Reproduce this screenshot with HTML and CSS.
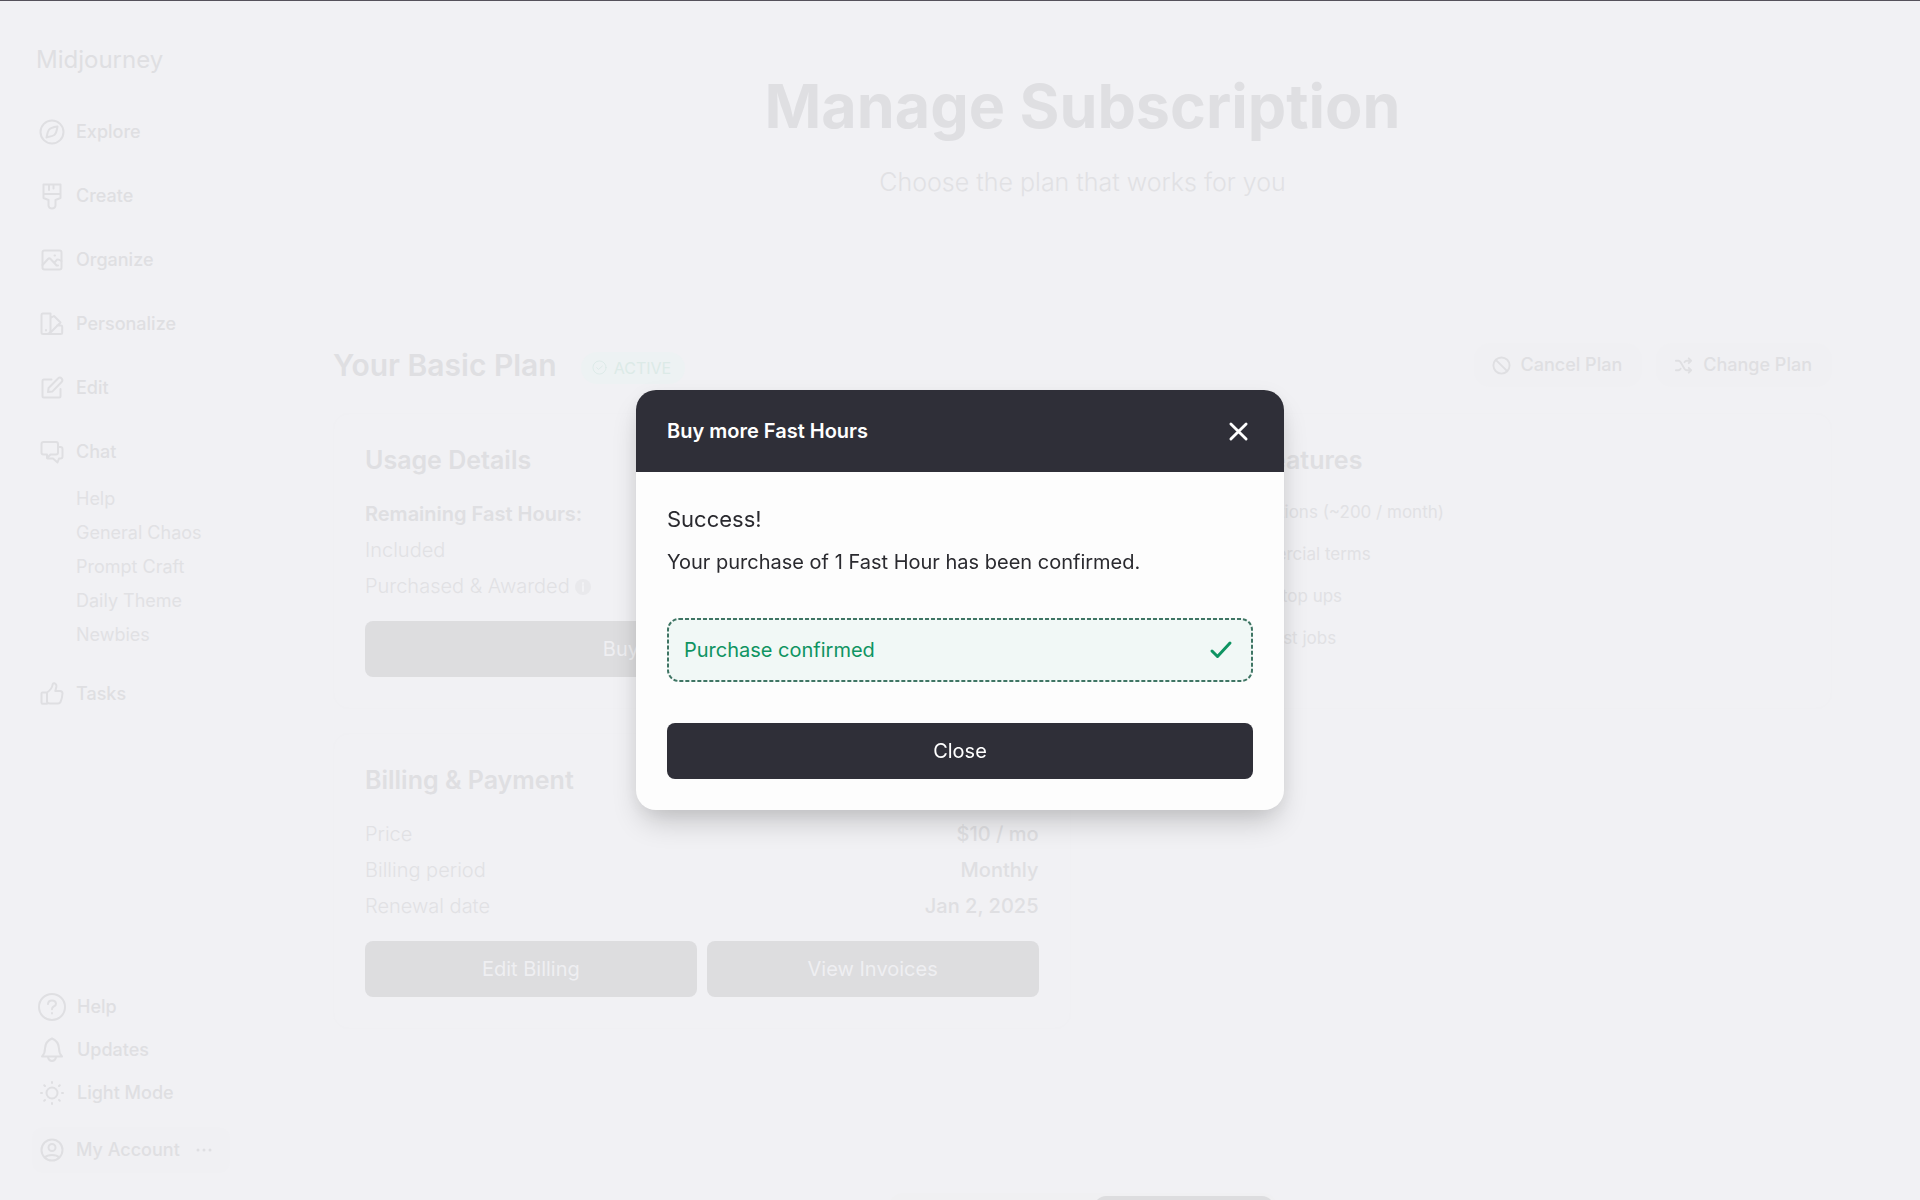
FILE: index.html
```html
<!DOCTYPE html>
<html lang="en">
<head>
<meta charset="utf-8">
<title>Manage Subscription</title>
<link rel="stylesheet" href="styles.css">
</head>
<body>
<div class="app">
  <aside class="sidebar">
    <a class="wordmark" href="#">Midjourney</a>
    <nav class="nav">
      <a href="#"><svg class="icon" viewBox="0 0 24 24"><circle cx="12" cy="12" r="11.500"/><path d="M17.500 6.500c-4 .5-7 1-8.700 3.500C7.500 12 7.300 14.500 6.500 17.500c2.500-.8 5.500-1 7.800-2.500 2.200-1.500 2.400-4.500 3.200-8.500z"/></svg>Explore</a>
      <a href="#"><svg class="icon" viewBox="0 0 24 24"><path d="M3.500 .5h17v13.500l-5 2v5.500a3.500 3 0 0 1-7 0V16l-5-2zM3.500 10h17M9 .5v5.500M13.500 .5v4"/></svg>Create</a>
      <a href="#"><svg class="icon" viewBox="0 0 24 24"><rect x="2.500" y="2.500" width="19" height="19" rx="2"/><path d="M2.500 17l5.500-6q1.300-1.300 2.600 0l6 6.500h1.400M14.500 14.500l2.500-2.800q1.200-.8 4.500 1.300M14.500 7.500h.5"/></svg>Organize</a>
      <a href="#"><svg class="icon" viewBox="0 0 24 24"><path d="M3 1.500h7.500v17a3.500 3.500 0 0 1-3.500 3.500H3q-1.500 0-1.500-1.500V3q0-1.500 1.500-1.500zM10.500 6l3.500-2 6.500 6.500-11 11M17 13.500h4q1.200 0 1.200 1.200V20.500q0 1.500-1.500 1.500H7M6 18v.5"/></svg>Personalize</a>
      <a href="#"><svg class="icon" viewBox="0 0 24 24"><path d="M11.500 3.500H4q-1.500 0-1.500 1.500v15q0 1.500 1.500 1.500h15q1.500 0 1.500-1.500v-7M8 16l.6-4 9.400-9.500q2-1.800 3.600 0t0 3.500L12.500 15.400z"/></svg>Edit</a>
      <div class="chat">
        <a href="#"><svg class="icon" viewBox="0 0 24 24"><path d="M3.500 2h12.500q2 0 2 2v8.500q0 2-2 2h-5.500L7 18v-3.500H3.500q-2 0-2-2V4q0-2 2-2zM18 7h2.500q2 0 2 2v7.500q0 2-2 2H19l-1.500 4-4.500-4H7.500"/></svg>Chat</a>
        <div class="subnav">
          <a href="#">Help</a>
          <a href="#">General Chaos</a>
          <a href="#">Prompt Craft</a>
          <a href="#">Daily Theme</a>
          <a href="#">Newbies</a>
        </div>
      </div>
      <a href="#"><svg class="icon" viewBox="0 0 24 24"><path d="M7 10.500q5-3.500 5.500-7.500.5-2.500 2.500-1.500 1.800 1 1.300 3.500l-1 4H20q2.500 0 2.500 2.500-.3 5-2 8.500-.7 1.500-2.500 1.500h-8q-3 0-3-2zM7 10.500H2.500q-1 0-1 1v9q0 1.200 1 1.200H7"/></svg>Tasks</a>
    </nav>
    <nav class="utility">
      <a href="#"><svg class="icon" viewBox="0 0 24 24"><circle cx="12" cy="12" r="13"/><path d="M8 9q.3-3.500 4-3.500t4 3.200q0 1.800-2.300 2.800-1.700.8-1.700 2.800M12 18v.5"/></svg>Help</a>
      <a href="#"><svg class="icon" viewBox="0 0 24 24"><path d="M2 18.500q3-3 3-8 .5-7.500 7-10 6.500 2.500 7 10 0 5 3 8zM8 19.500q1 3.500 4 3.500t4-3.500"/></svg>Updates</a>
      <a href="#"><svg class="icon" viewBox="0 0 24 24"><circle cx="12" cy="12" r="5.500"/><path d="M12 1v1M12 22v1M1 12h1M22 12h1M4.200 4.200l.8.8M19 19l.8.8M19.800 4.200l-.8.8M5 19l-.8.800"/></svg>Light Mode</a>
    </nav>
    <button class="account" type="button"><svg class="icon" viewBox="0 0 24 24"><circle cx="12" cy="12" r="10.500"/><circle cx="12" cy="9.500" r="3.500"/><path d="M5 19.500q2-2.500 7-2.500t7 2.500"/></svg>My Account<svg class="dots" viewBox="0 0 16 4"><circle cx="2" cy="2" r="1.500"/><circle cx="8" cy="2" r="1.500"/><circle cx="14" cy="2" r="1.500"/></svg></button>
  </aside>

  <main class="main">
    <header class="hero">
      <h1>Manage Subscription</h1>
      <p>Choose the plan that works for you</p>
    </header>
    <section>
      <div class="plan-head">
        <h2>Your Basic Plan</h2>
        <span class="badge"><svg viewBox="0 0 16 16"><circle cx="8" cy="8" r="7"/><path d="M5 8.200l2 1.800 4-3.500"/></svg>ACTIVE</span>
        <div class="plan-actions">
          <button type="button"><svg viewBox="0 0 20 20"><circle cx="10" cy="10" r="8.500"/><path d="M4 4l12 12"/></svg>Cancel Plan</button>
          <button type="button"><svg viewBox="0 0 20 20"><path d="M2 5h2.500q1.500 0 2.500 1.500l4 7q1 1.500 2.500 1.500H18M2 15h2.500q1.500 0 2.500-1.500M11 6.500Q12 5 13.500 5H18M15.500 2.500L18 5l-2.500 2.500M15.500 12.500L18 15l-2.500 2.500"/></svg>Change Plan</button>
        </div>
      </div>
      <div class="cards">
        <article class="card">
          <h3>Usage Details</h3>
          <dl>
            <div><dt><b>Remaining Fast Hours:</b></dt></div>
            <div><dt>Included</dt></div>
            <div><dt>Purchased &amp; Awarded <svg class="info" viewBox="0 0 16 16"><circle cx="8" cy="8" r="8"/><path d="M8 7v5M8 4v1"/></svg></dt></div>
          </dl>
          <div class="card-actions"><button type="button">Buy more Fast Hours</button></div>
        </article>
        <article class="card">
          <h3>Basic Plan Features</h3>
          <ul>
            <li>Limited generations (~200 / month)</li>
            <li>General commercial terms</li>
            <li>Optional credit top ups</li>
            <li>3 concurrent fast jobs</li>
          </ul>
        </article>
        <article class="card">
          <h3>Billing &amp; Payment</h3>
          <dl>
            <div><dt>Price</dt><dd>$10 / mo</dd></div>
            <div><dt>Billing period</dt><dd>Monthly</dd></div>
            <div><dt>Renewal date</dt><dd>Jan 2, 2025</dd></div>
          </dl>
          <div class="card-actions"><button type="button">Edit Billing</button><button type="button">View Invoices</button></div>
        </article>
      </div>
    </section>
    <div class="period"><span></span><span class="period-on"></span></div>
  </main>
</div>

<div class="overlay">
  <div class="modal" role="dialog" aria-labelledby="modal-title">
    <header class="modal-head">
      <h2 id="modal-title">Buy more Fast Hours</h2>
      <button type="button" aria-label="Dismiss"><svg viewBox="0 0 20 20"><path d="M2 2l16 16M18 2L2 18"/></svg></button>
    </header>
    <div class="modal-body">
      <h3>Success!</h3>
      <p>Your purchase of 1 Fast Hour has been confirmed.</p>
      <div class="confirmed"><svg class="dashes"><rect width="100%" height="100%" rx="11"/></svg>Purchase confirmed<svg class="check" viewBox="0 0 22 18"><path d="M2 10l5.500 5.500L20 2"/></svg></div>
      <button class="close" type="button">Close</button>
    </div>
  </div>
</div>
</body>
</html>
```
FILE: styles.css
```css
* { box-sizing: border-box; }

:root {
  --page: #f1f1f4;
  --faint: #dfdfe2;
  --fainter: #e1e1e4;
  --ink: #2f2f38;
}

html, body { height: 100%; }

body {
  margin: 0;
  overflow: hidden;
  background: var(--page);
  color: var(--faint);
  font-family: Inter, "Liberation Sans", sans-serif;
  font-size: 20px;
  line-height: 24px;
}

h1, h2, h3, p, dl, dd, ul { margin: 0; padding: 0; }
a { color: inherit; text-decoration: none; }
button { border: 0; padding: 0; background: none; color: inherit; font: inherit; }
svg { flex: none; fill: none; stroke: currentColor; stroke-width: 2; stroke-linecap: round; stroke-linejoin: round; overflow: visible; }

.app {
  display: grid;
  grid-template-columns: 245px 1fr;
  grid-template-rows: minmax(0, 1fr);
  height: 100%;
  overflow: hidden;
  border-top: 1px solid #55525b;
}

.sidebar {
  display: flex;
  flex-direction: column;
  padding: 44px 8px 27px 32px;
  font-size: 18px;
  font-weight: 500;
}

.wordmark { padding-left: 4px; font-size: 24px; line-height: 30px; font-weight: 400; }

.nav { display: flex; flex-direction: column; gap: 40px; margin-top: 45px; }
.nav a, .utility a { display: flex; align-items: center; gap: 12px; padding-left: 8px; }
.icon { width: 24px; height: 24px; }
.subnav { display: flex; flex-direction: column; gap: 10px; margin: 23px 0 -5px; padding-left: 36px; font-weight: 400; color: var(--fainter); }

.utility { display: flex; flex-direction: column; gap: 19px; margin-top: auto; }
.utility a { gap: 13px; }

.account {
  display: flex;
  align-items: center;
  align-self: flex-start;
  gap: 12px;
  margin-top: 22px;
  padding: 11px 18px 11px 8px;
  border-radius: 12px;
  background: #f0f0f3;
}
.dots { width: 16px; height: 4px; margin-left: 4px; fill: currentColor; stroke: none; }

.main { display: flex; flex-direction: column; min-width: 0; padding: 65px 88px 0; }
.main > * { flex: none; }

.hero { text-align: center; }
.hero h1 { font-size: 61px; line-height: 80px; font-weight: 700; }
.hero p { margin-top: 20px; font-size: 25px; line-height: 32px; font-weight: 300; color: var(--fainter); }

.plan-head { display: flex; align-items: center; height: 48px; margin-top: 143px; }
.plan-head h2 { font-size: 30px; line-height: 40px; font-weight: 600; }
.badge {
  display: flex; align-items: center; gap: 7px;
  margin: 5px 0 0 24px; padding: 4px 14px 4px 11px;
  border-radius: 16px; background: #edf2f3; color: #dceae7;
  font-size: 16px;
}
.badge svg { width: 15px; height: 15px; stroke-width: 1; }
.plan-actions { display: flex; gap: 14px; margin-left: auto; font-size: 18px; font-weight: 500; }
.plan-actions button { display: flex; align-items: center; gap: 10px; padding: 10px 20px 10px 18px; border-radius: 16px; background: #f0f0f3; }
.plan-actions svg { width: 19px; height: 19px; }

.cards { display: grid; grid-template-columns: 1fr 1fr; gap: 24px; margin-top: 24px; }
.card { padding: 31px; border-radius: 16px; border: 1px solid #f0f0f3; }
.card h3 { font-size: 25px; line-height: 30px; font-weight: 600; }
.card dl { display: grid; gap: 12px; margin-top: 27px; }
.card dl div { display: flex; justify-content: space-between; }
.card dt { color: var(--fainter); font-weight: 300; }
.card dt b { color: var(--faint); font-weight: 600; }
.card dd { font-weight: 500; }
.info { width: 16px; height: 16px; vertical-align: -2px; fill: #e9e9ec; stroke: #f2f2f5; }
.info circle { stroke: none; }
.card-actions { display: grid; grid-auto-flow: column; grid-auto-columns: 1fr; gap: 10px; margin-top: 23px; }
.card-actions button { height: 56px; border-radius: 8px; background: #dddddf; color: #efeff2; }
.card ul { display: grid; gap: 18px; margin-top: 25px; padding-left: 33px; list-style: none; font-size: 17px; color: var(--fainter); }

.period { display: flex; justify-content: flex-end; align-self: center; width: 388px; margin-top: 164px; padding: 3px; border-radius: 14px; background: #f0f0f2; }
.period span { width: 202px; height: 48px; border-radius: 12px; }
.period .period-on { width: 180px; background: #dddddf; }

.overlay { position: fixed; inset: 0; display: grid; place-items: center; }
.modal {
  width: 648px; max-width: 94vw; overflow: hidden;
  border-radius: 20px; background: #fdfdfd; color: #2a2a2f;
  box-shadow: 0 16px 30px -6px rgba(0, 0, 0, .2), 0 4px 20px rgba(0, 0, 0, .05);
}
.modal-head { display: flex; align-items: center; justify-content: space-between; padding: 29px 36px 29px 31px; background: var(--ink); color: #fff; }
.modal-head h2 { font-size: 20px; line-height: 24px; font-weight: 600; }
.modal-head svg { display: block; width: 19px; height: 19px; stroke-width: 3; }
.modal-body { padding: 32px 31px 31px; }
.modal-body h3 { font-size: 22px; line-height: 30px; font-weight: 400; }
.modal-body p { margin-top: 16px; }
.confirmed {
  position: relative;
  display: flex; align-items: center; justify-content: space-between;
  height: 64px; margin-top: 44px; padding: 0 21px 0 17px;
  border-radius: 12px; background: #f1f8f6; color: #0f9462;
}
.dashes { position: absolute; inset: 1px; width: calc(100% - 2px); height: calc(100% - 2px); stroke: #3f7564; stroke-linecap: butt; stroke-dasharray: 4 2; }
.check { width: 22px; height: 18px; stroke-width: 3; }
.close { width: 100%; height: 56px; margin-top: 41px; border-radius: 8px; background: var(--ink); color: #fff; }
```
